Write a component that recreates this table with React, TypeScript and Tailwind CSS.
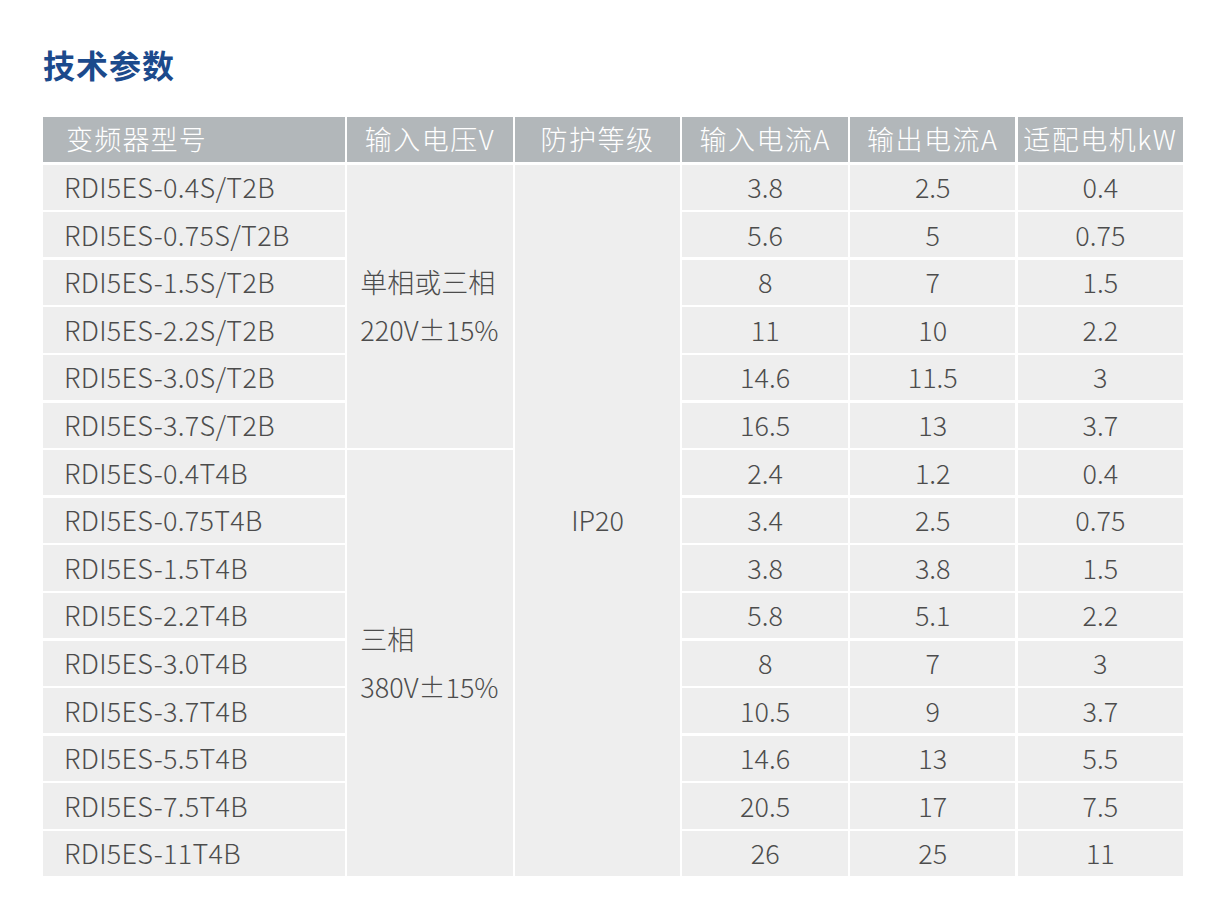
const rows = [
  { model: "RDI5ES-0.4S/T2B", iin: "3.8", iout: "2.5", kw: "0.4" },
  { model: "RDI5ES-0.75S/T2B", iin: "5.6", iout: "5", kw: "0.75" },
  { model: "RDI5ES-1.5S/T2B", iin: "8", iout: "7", kw: "1.5" },
  { model: "RDI5ES-2.2S/T2B", iin: "11", iout: "10", kw: "2.2" },
  { model: "RDI5ES-3.0S/T2B", iin: "14.6", iout: "11.5", kw: "3" },
  { model: "RDI5ES-3.7S/T2B", iin: "16.5", iout: "13", kw: "3.7" },
  { model: "RDI5ES-0.4T4B", iin: "2.4", iout: "1.2", kw: "0.4" },
  { model: "RDI5ES-0.75T4B", iin: "3.4", iout: "2.5", kw: "0.75" },
  { model: "RDI5ES-1.5T4B", iin: "3.8", iout: "3.8", kw: "1.5" },
  { model: "RDI5ES-2.2T4B", iin: "5.8", iout: "5.1", kw: "2.2" },
  { model: "RDI5ES-3.0T4B", iin: "8", iout: "7", kw: "3" },
  { model: "RDI5ES-3.7T4B", iin: "10.5", iout: "9", kw: "3.7" },
  { model: "RDI5ES-5.5T4B", iin: "14.6", iout: "13", kw: "5.5" },
  { model: "RDI5ES-7.5T4B", iin: "20.5", iout: "17", kw: "7.5" },
  { model: "RDI5ES-11T4B", iin: "26", iout: "25", kw: "11" },
];

const headers = ["输入电压V", "防护等级", "输入电流A", "输出电流A", "适配电机kW"];

const cell = "flex items-center bg-[#eeeeee]";

export default function App() {
  return (
    <div
      className="min-h-screen bg-white pl-[43px] pt-[42px] text-[#4c4c4c]"
      style={{ fontFamily: '"Noto Sans CJK SC", "Noto Sans", sans-serif' }}
    >
      {/* 标题 */}
      <h1 className="text-[32px] font-bold leading-[44px] tracking-[1px] text-[#1c4a8c]">
        技术参数
      </h1>

      {/* 参数表 */}
      <div className="mt-[31px] grid w-[1140px] grid-cols-[302px_repeat(5,1fr)] grid-rows-[repeat(16,45.3px)] gap-[2.3px] text-[27px] font-light">
        <div className="flex items-center bg-[#b2b7ba] pl-[23px] tracking-[1.2px] text-white">
          变频器型号
        </div>
        {headers.map((h) => (
          <div
            key={h}
            className="flex items-center justify-center bg-[#b2b7ba] tracking-[1.5px] text-white"
          >
            {h}
          </div>
        ))}

        {rows.map((r, i) => (
          <>
            <div key={r.model} className={`${cell} pl-[21px] tracking-[0.3px]`}>
              {r.model}
            </div>
            {i === 0 && (
              <div className={`${cell} row-span-6 pl-[13px] leading-[48px]`}>
                <div>
                  单相或三相
                  <br />
                  220V±15%
                </div>
              </div>
            )}
            {i === 6 && (
              <div className={`${cell} row-span-9 pl-[13px] leading-[48px]`}>
                <div>
                  三相
                  <br />
                  380V±15%
                </div>
              </div>
            )}
            {i === 0 && (
              <div className={`${cell} row-span-15 justify-center`}>IP20</div>
            )}
            <div className={`${cell} justify-center`}>{r.iin}</div>
            <div className={`${cell} justify-center`}>{r.iout}</div>
            <div className={`${cell} justify-center`}>{r.kw}</div>
          </>
        ))}
      </div>
    </div>
  );
}
